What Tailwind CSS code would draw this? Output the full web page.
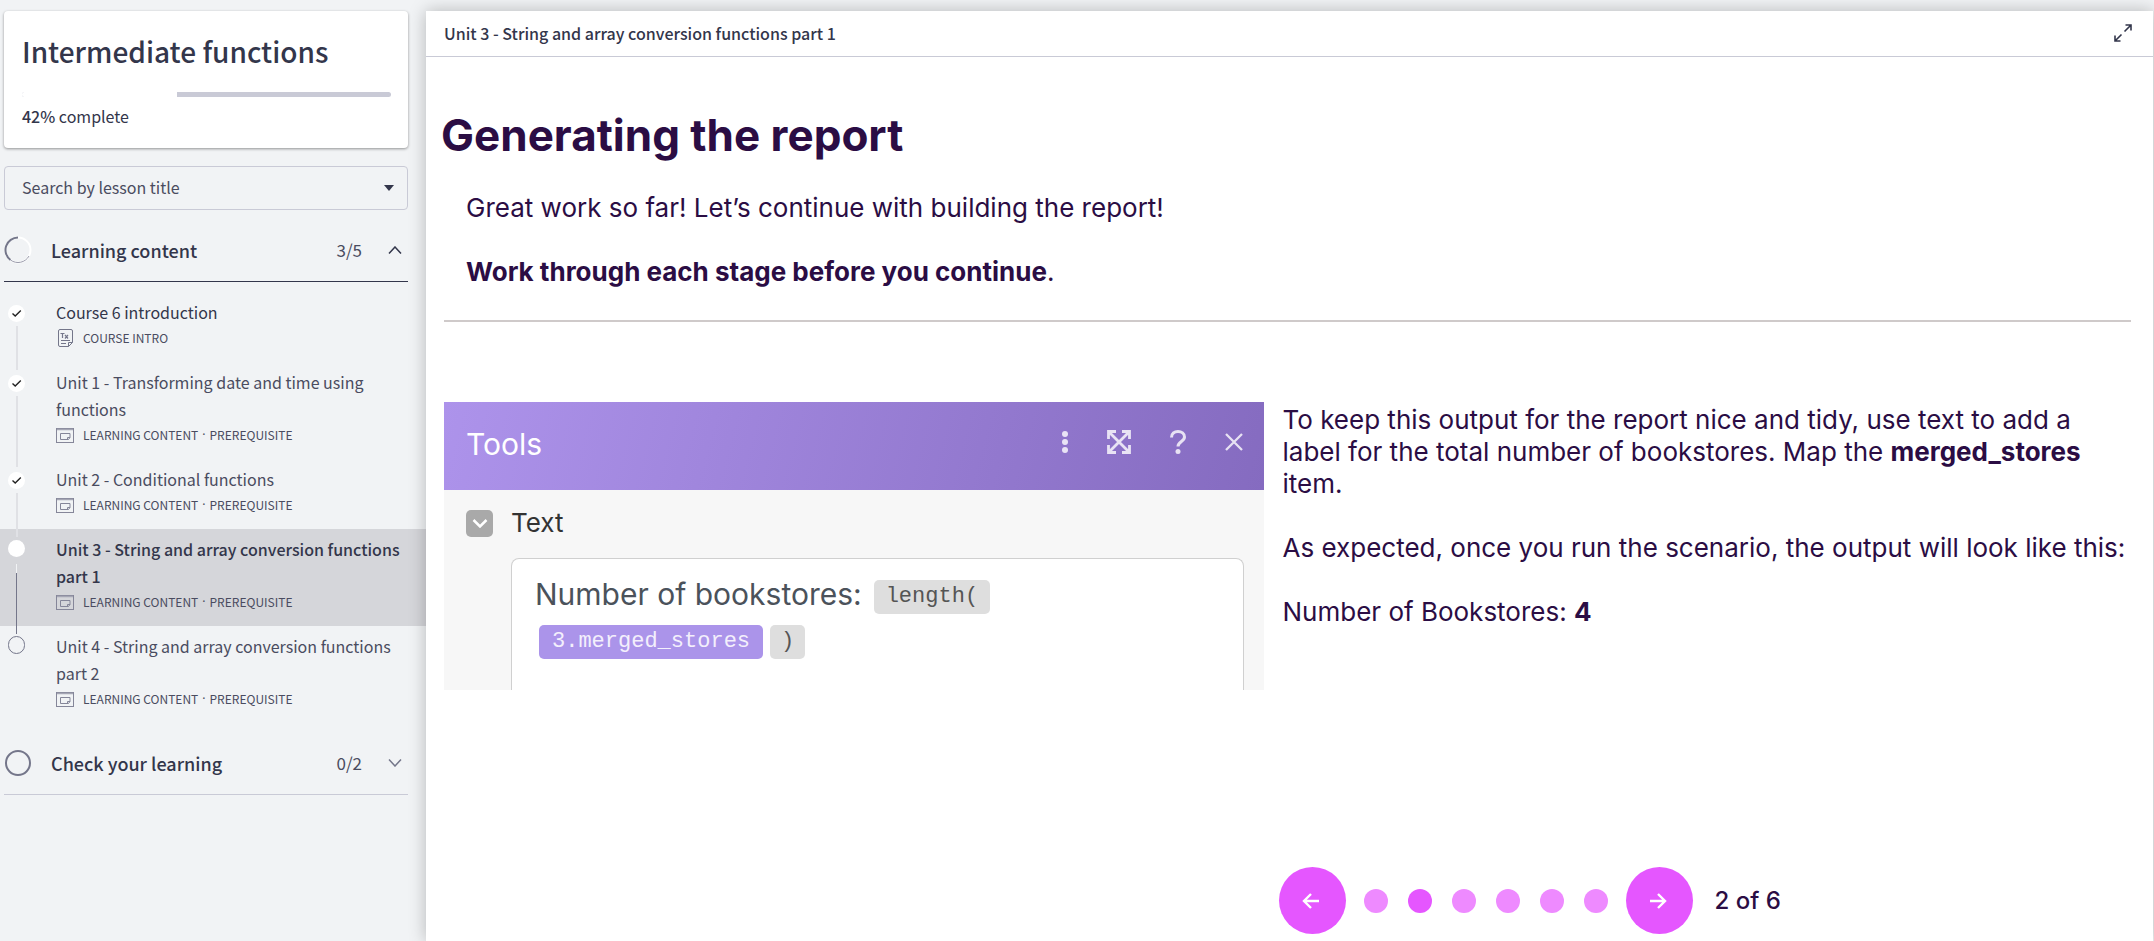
<!DOCTYPE html>
<html lang="en">
<head>
<meta charset="utf-8">
<title>Intermediate functions</title>
<script src="https://cdn.jsdelivr.net/npm/@tailwindcss/browser@4"></script>
</head>
<body class="flex min-h-screen bg-[#f1f3f5] pt-[11px] pr-px font-['Noto_Sans_CJK_SC',sans-serif] text-[#33364b]">

<svg class="hidden" aria-hidden="true">
  <symbol id="check" viewBox="0 0 17 17"><circle cx="8.5" cy="8.5" r="8.5" fill="#fff"/><path d="M4.5 8.5 7.2 11 12.8 5.5" fill="none" stroke="#222" stroke-width="1.4"/></symbol>
  <symbol id="frame" viewBox="0 0 18 15"><rect x=".5" y=".5" width="17" height="14" fill="none" stroke="#858699"/><path d="M1 1.5h16" stroke="#a5a6b4" stroke-width="1.5"/><path d="M4.500 11.500v-6h9.500v4l-1.500 2zM14 9.500h-2.500v2" fill="none" stroke="#858699"/></symbol>
</svg>

<aside class="w-[426px] shrink-0">
  <div class="pr-[18px] pl-1">
    <section class="h-[137px] rounded-[4px] bg-white pr-[17px] pl-[18px] pt-5 shadow-[0_1px_3px_rgba(0,0,0,0.4)]">
      <h1 class="text-[28px] leading-10 font-medium">Intermediate functions</h1>
      <div class="mt-[21px] flex h-[5px] overflow-hidden rounded-full bg-[#c9cad6]" role="progressbar" aria-valuenow="42" aria-valuemin="0" aria-valuemax="100" aria-label="Course progress"><div class="bg-white" style="width:42%"></div></div>
      <p class="mt-[7px] text-base leading-6"><span class="font-medium">42%</span> complete</p>
    </section>
    <div class="mt-[18px] flex h-11 items-center rounded-[4px] border border-[#c9cad6] pr-[13px] pl-[17px]">
      <input type="text" aria-label="Search by lesson title" placeholder="Search by lesson title" class="min-w-0 flex-1 bg-transparent pb-[3px] text-base leading-6 outline-none placeholder:text-[#4a4c60]">
      <svg class="h-[6px] w-[10px]" viewBox="0 0 10 6"><path d="M0 0h10L5 6z" fill="#33364b"/></svg>
    </div>
    <button type="button" aria-expanded="true" class="mt-[9px] flex h-[63px] w-full items-center border-b border-[#33364b] text-left">
      <svg class="size-[28px]" viewBox="0 0 28 28" fill="none"><circle cx="14" cy="14" r="12.500" stroke="#fff" stroke-width="2"/><path d="M14 1.500a12.500 12.500 0 0 0-7.500 22.500" stroke="#74768a" stroke-width="2"/><path d="M6.500 24a12.500 12.500 0 0 0 18.500-4" stroke="#9a9bab"/></svg>
      <span class="ml-[19px] flex-1 text-lg font-medium">Learning content</span>
      <span class="text-[17px] text-[#4a4c60]">3/5</span>
      <svg class="mr-[6px] ml-[26px] h-2 w-[14px]" viewBox="0 0 14 8" fill="none" stroke="#33364b" stroke-width="1.500"><path d="M1 7.500 7 1l6 6.500"/></svg>
    </button>
  </div>

  <ol class="mt-[10px] text-[#4a4c60]">
    <li><a href="#intro" class="flex pr-[18px] pl-2">
      <span class="relative z-10 -mb-2 flex w-[17px] flex-col items-center pt-[13px]"><svg class="size-[17px] shrink-0"><use href="#check"/></svg><span class="mt-1 w-[2px] flex-1 bg-[#e0e1e5]"></span></span>
      <span class="ml-[31px] flex-1 pt-[7px] pb-3"><span class="block text-base leading-[27px] text-[#33364b]">Course 6 introduction</span>
      <span class="flex h-6 items-center text-xs"><svg class="mr-[10px] ml-[2px] h-[18px] w-[15px]" viewBox="0 0 15 18" fill="none" stroke="#74768a"><path d="M2 .5h11q1.500 0 1.500 1.500v11.500l-4 4H2Q.5 17.500.5 16V2Q.5.5 2 .5zM14.500 13.500h-4v4M3 11.500h9M3 14.500h5"/><path d="M2.500 4.500h4M4.500 4.500v4.500M7 6l3 3.500M10 6 7 9.500" stroke-width="1.200"/></svg>COURSE INTRO</span></span>
    </a></li>
    <li><a href="#unit-1" class="flex pr-[18px] pl-2">
      <span class="relative z-10 -mb-2 flex w-[17px] flex-col items-center pt-[13px]"><svg class="size-[17px] shrink-0"><use href="#check"/></svg><span class="mt-1 w-[2px] flex-1 bg-[#e0e1e5]"></span></span>
      <span class="ml-[31px] flex-1 pt-[7px] pb-3"><span class="block text-base leading-[27px]">Unit 1 - Transforming date and time using functions</span>
      <span class="flex h-6 items-center text-xs"><svg class="mr-[9px] h-[15px] w-[18px]"><use href="#frame"/></svg>LEARNING CONTENT<span class="mx-1 font-['Noto_Sans',sans-serif]">·</span>PREREQUISITE</span></span>
    </a></li>
    <li><a href="#unit-2" class="flex pr-[18px] pl-2">
      <span class="relative z-10 -mb-2 flex w-[17px] flex-col items-center pt-[13px]"><svg class="size-[17px] shrink-0"><use href="#check"/></svg><span class="mt-1 w-[2px] flex-1 bg-[#e0e1e5]"></span></span>
      <span class="ml-[31px] flex-1 pt-[7px] pb-3"><span class="block text-base leading-[27px]">Unit 2 - Conditional functions</span>
      <span class="flex h-6 items-center text-xs"><svg class="mr-[9px] h-[15px] w-[18px]"><use href="#frame"/></svg>LEARNING CONTENT<span class="mx-1 font-['Noto_Sans',sans-serif]">·</span>PREREQUISITE</span></span>
    </a></li>
    <li class="bg-[#d5d6da]"><a href="#unit-3" aria-current="page" class="flex pr-[18px] pl-2">
      <span class="relative z-10 -mb-2 flex w-[17px] flex-col items-center pt-[11px]"><span class="size-[17px] shrink-0 rounded-full bg-white"></span><span class="mt-[7px] h-[9px] w-px bg-[#f1f3f5]"></span><span class="w-px flex-1 bg-[#74768a]"></span></span>
      <span class="ml-[31px] flex-1 pt-[7px] pb-3"><span class="block text-base leading-[27px] font-medium text-[#33364b]">Unit 3 - String and array conversion functions part 1</span>
      <span class="flex h-6 items-center text-xs"><svg class="mr-[9px] h-[15px] w-[18px]"><use href="#frame"/></svg>LEARNING CONTENT<span class="mx-1 font-['Noto_Sans',sans-serif]">·</span>PREREQUISITE</span></span>
    </a></li>
    <li><a href="#unit-4" class="flex pr-[18px] pl-2">
      <span class="flex w-[17px] flex-col items-center pt-[10px]"><span class="h-[18px] w-[17px] shrink-0 rounded-full border border-[#74768a]"></span></span>
      <span class="ml-[31px] flex-1 pt-[7px] pb-3"><span class="block text-base leading-[27px]">Unit 4 - String and array conversion functions part 2</span>
      <span class="flex h-6 items-center text-xs"><svg class="mr-[9px] h-[15px] w-[18px]"><use href="#frame"/></svg>LEARNING CONTENT<span class="mx-1 font-['Noto_Sans',sans-serif]">·</span>PREREQUISITE</span></span>
    </a></li>
  </ol>

  <div class="pr-[18px] pl-1">
    <button type="button" aria-expanded="false" class="mt-[9px] flex h-[63px] w-full items-center border-b border-[#c9cad6] text-left">
      <svg class="size-[28px]" viewBox="0 0 28 28" fill="none"><circle cx="14" cy="14" r="12" stroke="#74768a" stroke-width="2"/></svg>
      <span class="ml-[19px] flex-1 text-lg font-medium">Check your learning</span>
      <span class="text-[17px] text-[#4a4c60]">0/2</span>
      <svg class="mr-[6px] ml-[26px] h-2 w-[14px]" viewBox="0 0 14 8" fill="none" stroke="#74768a" stroke-width="1.500"><path d="M1 .5 7 7l6-6.500"/></svg>
    </button>
  </div>
</aside>

<main class="flex min-w-0 flex-1 flex-col bg-white shadow-[0_0_16px_rgba(0,0,0,0.25)]">
  <header class="flex h-[46px] items-center justify-between border-b border-[#c9cad6] pr-[21px] pb-[2px] pl-[18px]">
    <h2 class="text-base leading-6 font-medium">Unit 3 - String and array conversion functions part 1</h2>
    <button type="button" aria-label="Full screen"><svg class="size-[18px]" viewBox="0 0 18 18" fill="none" stroke="#33364b" stroke-width="1.600"><path d="M11.500 1H17v5.500M17 1l-6.500 6.500M1 11.500V17h5.500M1 17l6.500-6.500"/></svg></button>
  </header>
  <article class="flex flex-1 flex-col pr-[22px] pl-[18px] font-['Inter',sans-serif] text-[26px] leading-8 font-[370] text-[#2b0d44]">
    <h3 class="-ml-[3px] mt-[50px] text-[44px] leading-[56px] font-bold">Generating the report</h3>
    <div class="mt-[29px] pl-[22px]">
      <p>Great work so far! Let’s continue with building the report!</p>
      <p class="mt-8"><strong class="font-[650]">Work through each stage before you continue</strong>.</p>
    </div>
    <hr class="mt-8 border-t-2 border-[#cfcaca]">
    <div class="mt-[80px] grid grid-cols-[820fr_848fr] gap-x-[18px]">
      <section class="flex h-[288px] flex-col bg-[#f7f7f7] font-normal">
        <div class="flex h-[88px] items-center bg-linear-[105deg] from-[#ad93eb] to-[#856bc0] pr-[21px] pb-2 pl-[22px] text-white/80">
          <h4 class="flex-1 pt-1 text-[30px] leading-10 text-white">Tools</h4>
          <button type="button" aria-label="More"><svg class="h-6 w-[6px]" viewBox="0 0 6 24" fill="currentColor"><circle cx="3" cy="4" r="3"/><circle cx="3" cy="12" r="3"/><circle cx="3" cy="20" r="3"/></svg></button>
          <button type="button" aria-label="Expand" class="ml-[39px]"><svg class="size-6" viewBox="0 0 24 24" fill="none" stroke="currentColor" stroke-width="2.800"><path d="m2 2 20 20M22 2 2 22M1.500 9V1.500H9M15 1.500h7.500V9M22.500 15v7.500H15M9 22.500H1.500V15"/></svg></button>
          <button type="button" aria-label="Help" class="ml-[39px]"><svg class="h-6 w-4" viewBox="0 0 16 24" fill="none" stroke="currentColor" stroke-width="3"><path d="M1.500 7.500C1.500 3.500 4.500 1.500 8 1.500s6.500 2 6.500 5.500c0 4.500-6.500 4.500-6.500 9.500"/><circle cx="8" cy="21.500" r="2.500" fill="currentColor" stroke="none"/></svg></button>
          <button type="button" aria-label="Close" class="ml-[39px]"><svg class="size-[18px]" viewBox="0 0 18 18" stroke="currentColor" stroke-width="2.300"><path d="m1 1 16 16M17 1 1 17"/></svg></button>
        </div>
        <div class="mt-[14px] flex items-center pl-[22px]">
          <button type="button" aria-label="Collapse" class="grid size-[27px] place-items-center rounded-[5px] bg-[#a9a9a9]"><svg class="h-[9px] w-4" viewBox="0 0 16 9" fill="none" stroke="#fff" stroke-width="2.500"><path d="m1.500 1 6.500 6.500L14.500 1"/></svg></button>
          <h5 class="ml-[18px] text-[26px] leading-[38px] text-[#333]">Text</h5>
        </div>
        <div class="mt-4 mr-5 ml-[67px] flex-1 rounded-t-[8px] border border-b-0 border-[#d0d0d0] bg-white pt-[15px] pl-[23px]">
          <div class="flex h-10 items-center text-[30px] text-[#4b525b]">Number of bookstores:<code class="mt-[6px] ml-3 h-[34px] rounded-[5px] bg-[#dedede] px-3 font-['Liberation_Mono',monospace] text-[22px] leading-[34px] text-[#555]">length(</code></div>
          <div class="mt-[11px] flex gap-[7px] pl-1"><code class="h-[34px] rounded-[5px] bg-[#ab94ea] px-[13px] font-['Liberation_Mono',monospace] text-[22px] leading-[34px] text-[#f3effc]">3.merged_stores</code><code class="h-[34px] rounded-[5px] bg-[#dedede] px-[11px] font-['Liberation_Mono',monospace] text-[22px] leading-[34px] text-[#555]">)</code></div>
        </div>
      </section>
      <div class="space-y-8 pt-[2px]">
        <p>To keep this output for the report nice and tidy, use text to add a label for the total number of bookstores. Map the <strong class="font-[650]">merged_stores</strong> item.</p>
        <p>As expected, once you run the scenario, the output will look like this:</p>
        <p>Number of Bookstores: <strong class="font-[650]">4</strong></p>
      </div>
    </div>
    <nav aria-label="Slides" class="mt-auto grid grid-cols-[820fr_848fr] gap-x-[18px] pb-[7px]">
      <div class="col-start-2 -ml-[3px] flex items-center">
        <button type="button" aria-label="Previous" class="grid size-[67px] place-items-center rounded-full bg-[#e556ff] pr-1"><svg class="h-4 w-[18px]" viewBox="0 0 18 16" fill="none" stroke="#fff" stroke-width="2.400"><path d="M17 8H2M9 1 2 8l7 7"/></svg></button>
        <div class="mx-[18px] flex gap-5">
          <button type="button" aria-label="Slide 1" class="size-6 rounded-full bg-[#ee8aff]"></button>
          <button type="button" aria-label="Slide 2" aria-current="true" class="size-6 rounded-full bg-[#e556ff]"></button>
          <button type="button" aria-label="Slide 3" class="size-6 rounded-full bg-[#ee8aff]"></button>
          <button type="button" aria-label="Slide 4" class="size-6 rounded-full bg-[#ee8aff]"></button>
          <button type="button" aria-label="Slide 5" class="size-6 rounded-full bg-[#ee8aff]"></button>
          <button type="button" aria-label="Slide 6" class="size-6 rounded-full bg-[#ee8aff]"></button>
        </div>
        <button type="button" aria-label="Next" class="grid size-[67px] place-items-center rounded-full bg-[#e556ff] pr-1"><svg class="h-4 w-[18px]" viewBox="0 0 18 16" fill="none" stroke="#fff" stroke-width="2.400"><path d="M1 8h15M9 1l7 7-7 7"/></svg></button>
        <p class="ml-[21px] text-2xl font-medium">2 of 6</p>
      </div>
    </nav>
  </article>
</main>
</body>
</html>
